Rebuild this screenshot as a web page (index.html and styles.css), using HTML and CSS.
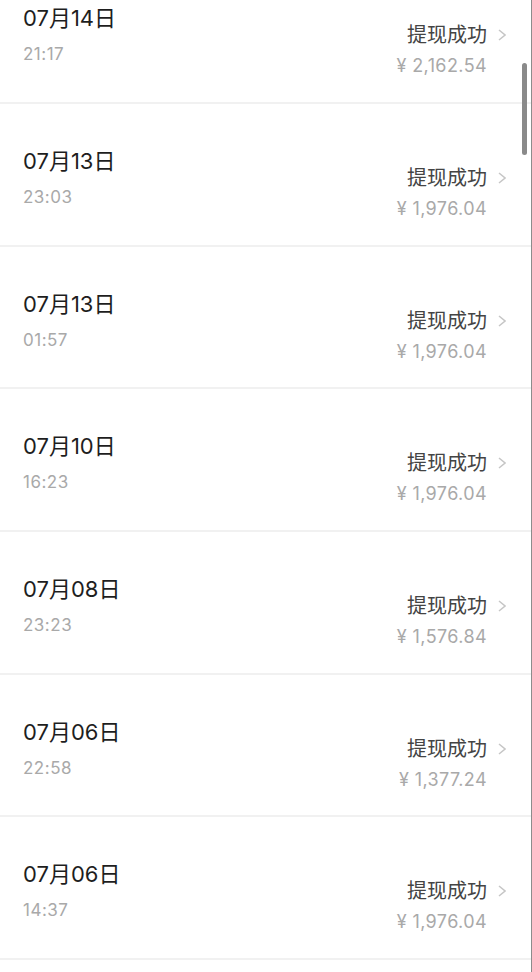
FILE: index.html
```html
<!DOCTYPE html>
<html lang="zh-CN">
<head>
    <meta charset="UTF-8">
    <meta name="viewport" content="width=device-width, initial-scale=1.0">
    <title>提现记录</title>
    <link rel="stylesheet" href="styles.css">
</head>
<body>
    <div class="page">
        <div class="record-list">
            <div class="record">
                <div class="record-left">
                    <div class="date">07月14日</div>
                    <div class="time">21:17</div>
                </div>
                <div class="record-right">
                    <div class="status">提现成功
                        <svg class="chevron" width="8" height="12" viewBox="0 0 8 12"><polyline points="1,1 7,6 1,11" /></svg>
                    </div>
                    <div class="amount">¥ 2,162.54</div>
                </div>
            </div>

            <div class="record">
                <div class="record-left">
                    <div class="date">07月13日</div>
                    <div class="time">23:03</div>
                </div>
                <div class="record-right">
                    <div class="status">提现成功
                        <svg class="chevron" width="8" height="12" viewBox="0 0 8 12"><polyline points="1,1 7,6 1,11" /></svg>
                    </div>
                    <div class="amount">¥ 1,976.04</div>
                </div>
            </div>

            <div class="record">
                <div class="record-left">
                    <div class="date">07月13日</div>
                    <div class="time">01:57</div>
                </div>
                <div class="record-right">
                    <div class="status">提现成功
                        <svg class="chevron" width="8" height="12" viewBox="0 0 8 12"><polyline points="1,1 7,6 1,11" /></svg>
                    </div>
                    <div class="amount">¥ 1,976.04</div>
                </div>
            </div>

            <div class="record">
                <div class="record-left">
                    <div class="date">07月10日</div>
                    <div class="time">16:23</div>
                </div>
                <div class="record-right">
                    <div class="status">提现成功
                        <svg class="chevron" width="8" height="12" viewBox="0 0 8 12"><polyline points="1,1 7,6 1,11" /></svg>
                    </div>
                    <div class="amount">¥ 1,976.04</div>
                </div>
            </div>

            <div class="record">
                <div class="record-left">
                    <div class="date">07月08日</div>
                    <div class="time">23:23</div>
                </div>
                <div class="record-right">
                    <div class="status">提现成功
                        <svg class="chevron" width="8" height="12" viewBox="0 0 8 12"><polyline points="1,1 7,6 1,11" /></svg>
                    </div>
                    <div class="amount">¥ 1,576.84</div>
                </div>
            </div>

            <div class="record">
                <div class="record-left">
                    <div class="date">07月06日</div>
                    <div class="time">22:58</div>
                </div>
                <div class="record-right">
                    <div class="status">提现成功
                        <svg class="chevron" width="8" height="12" viewBox="0 0 8 12"><polyline points="1,1 7,6 1,11" /></svg>
                    </div>
                    <div class="amount">¥ 1,377.24</div>
                </div>
            </div>

            <div class="record">
                <div class="record-left">
                    <div class="date">07月06日</div>
                    <div class="time">14:37</div>
                </div>
                <div class="record-right">
                    <div class="status">提现成功
                        <svg class="chevron" width="8" height="12" viewBox="0 0 8 12"><polyline points="1,1 7,6 1,11" /></svg>
                    </div>
                    <div class="amount">¥ 1,976.04</div>
                </div>
            </div>
        </div>
    </div>
    <div class="scrollbar"></div>
</body>
</html>
```

FILE: styles.css
```css
* {
    margin: 0;
    padding: 0;
    box-sizing: border-box;
}

html, body {
    height: 100%;
    overflow: hidden;
}

body {
    font-family: Inter, "Noto Sans CJK SC", sans-serif;
    background-color: #ffffff;
    color: #222222;
}

.page {
    height: 100%;
    border-right: 1px solid #8c8c8c;
    overflow: hidden;
}

.record-list {
    margin-top: -38.67px;
}

.record {
    display: flex;
    justify-content: space-between;
    height: 142.67px;
    padding-left: 23px;
    border-bottom: 2px solid #f1f1f1;
}

.record-left {
    padding-top: 44px;
}

.date {
    font-size: 22px;
    line-height: 26px;
    color: #1e1e1e;
}

.time {
    font-size: 17px;
    line-height: 20px;
    margin-top: 13px;
    letter-spacing: 0.5px;
    color: #a9a9a9;
}

.record-right {
    display: flex;
    flex-direction: column;
    align-items: flex-end;
    padding-top: 62px;
    padding-right: 25px;
}

.status {
    display: flex;
    align-items: center;
    font-size: 20px;
    line-height: 24px;
    color: #444444;
}

.chevron {
    margin-left: 11px;
    fill: none;
    stroke: #c6c6c6;
    stroke-width: 1.5;
}

.amount {
    margin-top: 9px;
    margin-right: 19px;
    font-size: 18px;
    line-height: 20px;
    letter-spacing: 0.4px;
    color: #a9a9a9;
}

.scrollbar {
    position: fixed;
    top: 63px;
    right: 5px;
    width: 5px;
    height: 92px;
    border-radius: 3px;
    background-color: #8a8a8a;
}
```
